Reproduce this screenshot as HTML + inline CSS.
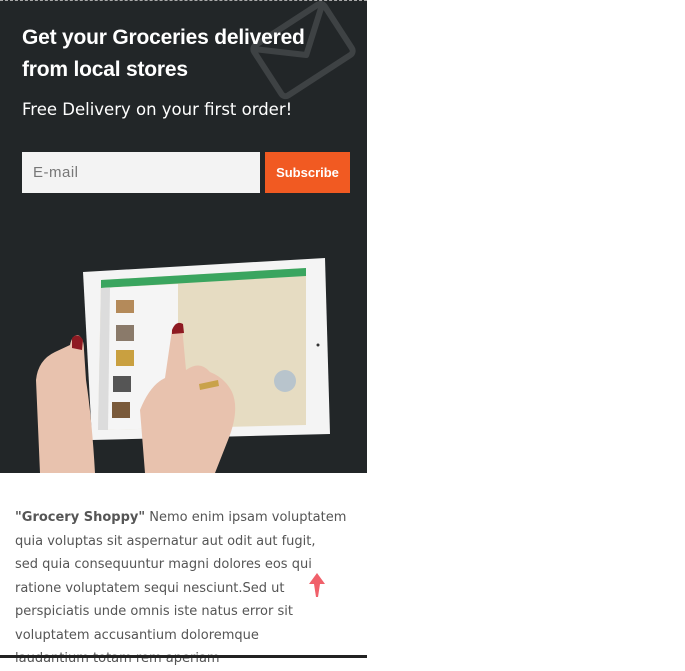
<!DOCTYPE html>
<html><head><style>
body{margin:0;background:#fff;width:685px;height:658px;overflow:hidden;position:relative;font-family:"Liberation Sans",sans-serif}
.top{position:absolute;left:0;top:0;width:367px;height:473px;background:#222628;overflow:hidden}
.dash{position:absolute;left:0;top:0;width:367px;height:1px;border-top:1px dashed #aaa}
h1{position:absolute;left:22px;top:22px;margin:0;color:#fff;font-size:21px;line-height:32px;font-weight:bold;letter-spacing:-0.2px}
.sub{position:absolute;left:22px;top:100px;color:#fff;font-family:"DejaVu Sans",sans-serif;font-size:16.5px}
.inp{position:absolute;left:22px;top:152px;width:238px;height:41px;background:#f3f3f3;color:#777;font-size:15px;line-height:41px;box-sizing:border-box;padding-left:11px;letter-spacing:.5px}
.btn{position:absolute;left:265px;top:152px;width:85px;height:41px;background:#f15a22;color:#fff;font-size:13px;font-weight:bold;line-height:41px;text-align:center}
.txt{position:absolute;left:15px;top:506px;width:360px;color:#555;font-family:"DejaVu Sans",sans-serif;font-size:13px;line-height:23.5px;white-space:nowrap}
.bar{position:absolute;left:0;top:655px;width:367px;height:3px;background:#222}
</style></head><body>
<div class="top">
<svg style="position:absolute;left:0;top:0" width="367" height="473">
 <g transform="translate(303,50) rotate(-33)" fill="none" stroke="#3e4244" stroke-width="6" stroke-linejoin="round">
  <rect x="-42" y="-30" width="84" height="60" rx="5"/>
  <path d="M-40 -27 L0 6 L40 -27"/>
 </g>
 <polygon points="83,272 325,258 330,434 92,440" fill="#f4f4f4"/>
 <polygon points="101,280 306,268 306,425 98,430" fill="#e6dcc2"/>
 <polygon points="101,280 306,268 306,276 101,288" fill="#3aa55f"/>
 <polygon points="101,288 178,284 178,428 98,430" fill="#f5f5f5"/>
 <polygon points="101,288 110,288 108,430 98,430" fill="#dcdcdc"/>
 <rect x="116" y="300" width="18" height="13" fill="#b48a5a"/>
 <rect x="116" y="325" width="18" height="16" fill="#8a7a6a"/>
 <rect x="116" y="350" width="18" height="16" fill="#c9a040"/>
 <rect x="113" y="376" width="18" height="16" fill="#555"/>
 <rect x="112" y="402" width="18" height="16" fill="#7a5a3a"/>
 <circle cx="285" cy="381" r="11" fill="#b8c4cc"/>
 <circle cx="318" cy="345" r="1.5" fill="#333"/>
 <path d="M40,473 L36,380 Q38,360 55,352 L70,345 Q72,335 78,335 Q84,338 84,350 L86,380 Q92,420 95,473 Z" fill="#e8c2ae"/>
 <path d="M72,338 Q78,332 83,340 L82,350 L72,348 Z" fill="#8e1a22"/>
 <path d="M145,473 L140,410 Q150,385 165,378 L172,330 Q176,322 182,326 L186,370 Q200,360 210,372 Q225,378 232,392 Q240,410 228,440 L215,473 Z" fill="#e8c2ae"/>
 <path d="M172,330 Q176,320 183,324 L184,333 L172,334 Z" fill="#8e1a22"/>
 <path d="M199,384 L218,380 L219,386 L200,390 Z" fill="#c9a24a"/>
</svg>
<div class="dash"></div>
<h1>Get your Groceries delivered<br>from local stores</h1>
<div class="sub">Free Delivery on your first order!</div>
<div class="inp">E-mail</div>
<div class="btn">Subscribe</div>
</div>
<div class="txt"><b>"Grocery Shoppy"</b> Nemo enim ipsam voluptatem<br>quia voluptas sit aspernatur aut odit aut fugit,<br>sed quia consequuntur magni dolores eos qui<br>ratione voluptatem sequi nesciunt.Sed ut<br>perspiciatis unde omnis iste natus error sit<br>voluptatem accusantium doloremque<br>laudantium totam rem aperiam</div>
<svg style="position:absolute;left:307px;top:572px" width="20" height="26"><path d="M10,1 L18,12 L13,12 L11,25 L9,25 L7,12 L2,12 Z" fill="#f0606a"/></svg>
<div class="bar"></div>
</body></html>
